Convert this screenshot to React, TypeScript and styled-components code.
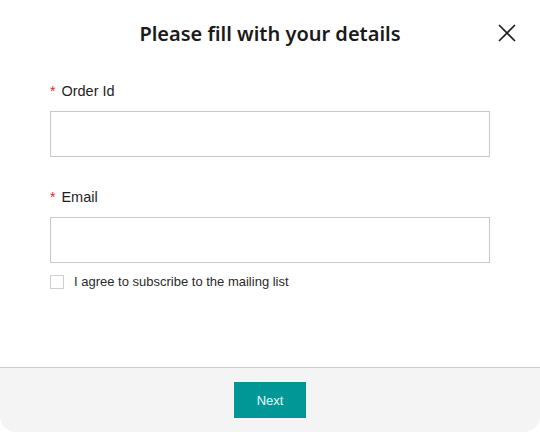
import React from "react";
import styled, { createGlobalStyle } from "styled-components";

const Global = createGlobalStyle`
  html, body { margin: 0; padding: 0; background: #ffffff; }
  body { font-family: "Liberation Sans", Arial, sans-serif; color: #1f1f1f; }
  * { box-sizing: border-box; }
`;

const Modal = styled.div`
  width: 540px;
  height: 432px;
  background: #ffffff;
  border-radius: 0 0 16px 16px;
  display: flex;
  flex-direction: column;
  overflow: hidden;
`;

const Header = styled.div`
  position: relative;
  height: 68px;
  padding-bottom: 2px;
  display: flex;
  align-items: center;
  justify-content: center;
`;

const Title = styled.h1`
  margin: 0;
  font-family: "Noto Sans", "Liberation Sans", sans-serif;
  font-size: 20px;
  font-weight: 600;
  color: #1a1a1a;
`;

const CloseButton = styled.button`
  position: absolute;
  right: 22px;
  top: 22px;
  width: 22px;
  height: 22px;
  padding: 0;
  border: none;
  background: transparent;
  display: flex;
  align-items: center;
  justify-content: center;
  cursor: pointer;
`;

const Body = styled.div`
  flex: 1;
  padding: 13px 50px 0;
  display: flex;
  flex-direction: column;
`;

const Field = styled.div<{ $gap?: number }>`
  display: flex;
  flex-direction: column;
  gap: 10px;
  margin-bottom: ${(p) => p.$gap ?? 0}px;
`;

const Label = styled.label`
  font-size: 14.5px;
  line-height: 20px;
  color: #1f1f1f;
  display: flex;
  align-items: center;
`;

const Star = styled.span`
  color: #d9262b;
  margin-right: 6px;
  font-size: 14px;
`;

const Input = styled.input`
  width: 440px;
  height: 46px;
  border: 1px solid #c9c9c9;
  border-radius: 0;
  padding: 0 12px;
  font-size: 14px;
  outline: none;
  background: #ffffff;
`;

const CheckRow = styled.label`
  margin-top: 9px;
  display: flex;
  align-items: center;
  gap: 10px;
  font-size: 13px;
  line-height: 20px;
  color: #2a2a2a;
`;

const Box = styled.span`
  width: 14px;
  height: 14px;
  border: 1px solid #cfcfcf;
  background: #ffffff;
  display: inline-block;
`;

const Footer = styled.div`
  height: 65px;
  border-top: 1px solid #cccccc;
  background: #f4f4f4;
  display: flex;
  align-items: center;
  justify-content: center;
`;

const NextButton = styled.button`
  width: 72px;
  height: 36px;
  border: none;
  background: #029797;
  color: #e9f7f7;
  font-family: "Liberation Sans", Arial, sans-serif;
  font-size: 13px;
  cursor: pointer;
`;

export default function App() {
  return (
    <>
      <Global />
      <Modal>
        <Header>
          <Title>Please fill with your details</Title>
          <CloseButton aria-label="Close">
            <svg width="18" height="18" viewBox="0 0 18 18">
              <path d="M1 1 L17 17 M17 1 L1 17" stroke="#1f1f1f" strokeWidth="1.7" fill="none" />
            </svg>
          </CloseButton>
        </Header>
        <Body>
          <Field $gap={30}>
            <Label><Star>*</Star>Order Id</Label>
            <Input type="text" />
          </Field>
          <Field>
            <Label><Star>*</Star>Email</Label>
            <Input type="email" />
          </Field>
          <CheckRow>
            <Box />
            I agree to subscribe to the mailing list
          </CheckRow>
        </Body>
        <Footer>
          <NextButton>Next</NextButton>
        </Footer>
      </Modal>
    </>
  );
}
